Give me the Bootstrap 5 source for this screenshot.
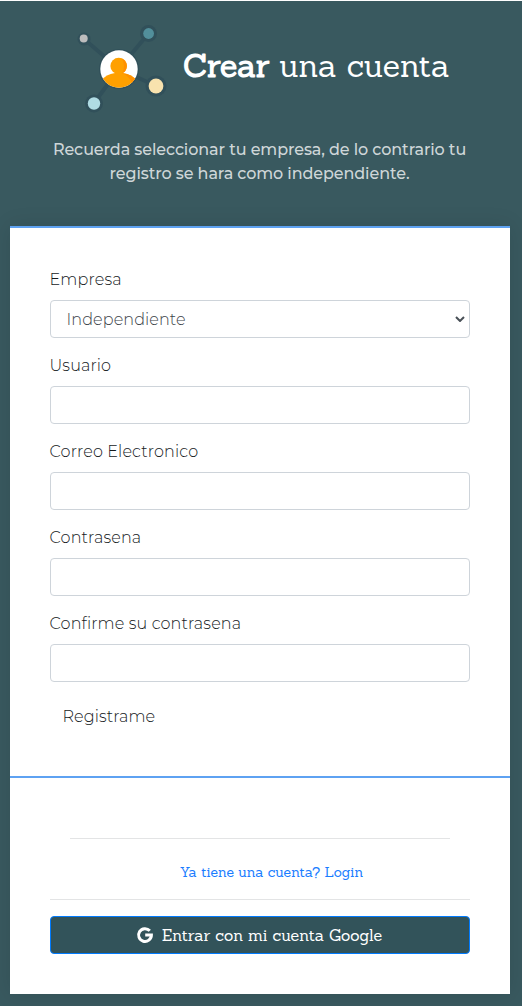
<!DOCTYPE html>
<html lang="es">
<head>
<meta charset="utf-8">
<meta name="viewport" content="width=device-width, initial-scale=1">
<title>Crear una cuenta</title>
<link href="https://cdn.jsdelivr.net/npm/bootstrap@5.3.0/dist/css/bootstrap.min.css" rel="stylesheet">
<style>
body{background:#39595f;border-top:1px solid #fff;min-height:1006px;font-family:Montserrat,Inter,"Liberation Sans",sans-serif;font-weight:300;color:#15191c;overflow:hidden}
.slab{font-family:"Sanchez","DejaVu Serif",serif}
.page-head{height:225px;padding-top:17px}
.brand-row{height:100px;padding-left:70px}
.page-title{font-size:32px;color:#fff;margin:-4px 0 0 3px;line-height:1.2;white-space:nowrap;font-weight:400}
.intro{color:#ced6d8;font-weight:500;letter-spacing:-.1px;margin-top:20px;padding-right:3px;font-size:16px;line-height:24px}
.panel{margin:0 12px 0 10px;background:#fff;box-shadow:0 0 20px rgba(0,0,0,.1)}
.panel-part{border-top:2px solid #5ea2f2;padding:40px}
.form-label{display:block;line-height:24px;margin-bottom:8px;letter-spacing:.15px;margin-left:-.5px;font-weight:350}
.form-control,.form-select{height:38px;border:1px solid #ced4da;border-radius:4px;box-shadow:none;font-weight:350;color:#3c4349}
.form-select{padding:7px 16px 5px 15.5px;letter-spacing:.1px;background-image:url("data:image/svg+xml,%3Csvg xmlns='http://www.w3.org/2000/svg' viewBox='0 0 10 6'%3E%3Cpath d='M1 1l4 4 4-4' fill='none' stroke='%23495057' stroke-width='2'/%3E%3C/svg%3E");background-size:10px 6px;background-position:right 4px center}
.btn-submit{font-weight:350;letter-spacing:.1px;padding-left:11.5px;color:#15191c}
.rule{height:1px;background:#e3e4e5}
.rule-short{margin:60px 20px 0}
.login-row{height:60px;padding:5px 0 0 23px}
.login-link{font-size:14px;line-height:20px;color:#1a7dff;text-decoration:none;font-weight:400}
.btn-google{height:38px;background:#32535a;border:1px solid #007bff;border-radius:4px;color:#fff;font-size:16px;padding:0 2px 1px 0}
</style>
</head>
<body>
<header class="page-head">
  <div class="brand-row d-flex align-items-center">
    <svg width="110" height="100" viewBox="70 18 110 100" class="flex-shrink-0" aria-hidden="true">
      <g stroke="#31505a" stroke-width="4"><path d="M84 39L119 69L148 34M94 103L119 69L156 86" fill="none"/></g>
      <g fill="#31505a"><circle cx="84" cy="39" r="6.5"/><circle cx="148.5" cy="33.500" r="8.500"/><circle cx="94" cy="103.500" r="9"/><circle cx="156" cy="86" r="10.500"/><circle cx="119" cy="69" r="20"/></g>
      <circle cx="83.700" cy="38.500" r="4" fill="#bdbdbd"/>
      <circle cx="148.600" cy="33.500" r="5.400" fill="#528f9b"/>
      <circle cx="94" cy="103.500" r="6.200" fill="#b0dce3"/>
      <circle cx="156" cy="86" r="7.400" fill="#f8e2ae"/>
      <clipPath id="face"><circle cx="119" cy="69" r="18.700"/></clipPath>
      <circle cx="119" cy="69" r="18.700" fill="#fff"/>
      <g clip-path="url(#face)"><path d="M101 88V81Q106 74 115 73H123Q132 74 137 81V88Z" fill="#ffa000"/><path d="M122 73Q132 74 137 81L132 83Q129 76 122 73Z" fill="#ff9000"/><circle cx="118.700" cy="66" r="8.300" fill="#ffa000"/><path d="M122 58.500a8.300 8.300 0 0 1 0 15q4-7 0-15" fill="#ff9000"/></g>
    </svg>
    <h1 class="page-title slab"><b>Crear</b> una cuenta</h1>
  </div>
  <p class="intro text-center mb-0">Recuerda seleccionar tu empresa, de lo contrario tu<br>registro se hara como independiente.</p>
</header>
<main class="panel">
  <form class="panel-part">
    <div class="mb-3"><label class="form-label" for="empresa">Empresa</label>
    <select class="form-select" id="empresa"><option>Independiente</option></select></div>
    <div class="mb-3"><label class="form-label" for="usuario">Usuario</label><input class="form-control" id="usuario"></div>
    <div class="mb-3"><label class="form-label" for="correo">Correo Electronico</label><input class="form-control" id="correo" type="email"></div>
    <div class="mb-3"><label class="form-label" for="clave">Contrasena</label><input class="form-control" id="clave" type="password"></div>
    <div class="mb-3"><label class="form-label" for="clave2">Confirme su contrasena</label><input class="form-control" id="clave2" type="password"></div>
    <button class="btn btn-submit d-block" type="button">Registrame</button>
  </form>
  <div class="panel-part pt-0">
    <div class="rule rule-short"></div>
    <div class="login-row d-flex justify-content-center align-items-center"><a href="#" class="login-link slab">Ya tiene una cuenta? Login</a></div>
    <div class="rule mb-3"></div>
    <button type="button" class="btn btn-google slab w-100 d-flex align-items-center justify-content-center gap-2">
      <svg width="18" height="18" viewBox="0 0 18 18" aria-hidden="true"><path d="M13.800 4.800A6.400 6.400 0 1 0 15.400 9H9.200" fill="none" stroke="#fff" stroke-width="3"/></svg>
      <span>Entrar con mi cuenta Google</span>
    </button>
  </div>
</main>
<script src="https://cdn.jsdelivr.net/npm/bootstrap@5.3.0/dist/js/bootstrap.bundle.min.js"></script>
</body>
</html>
